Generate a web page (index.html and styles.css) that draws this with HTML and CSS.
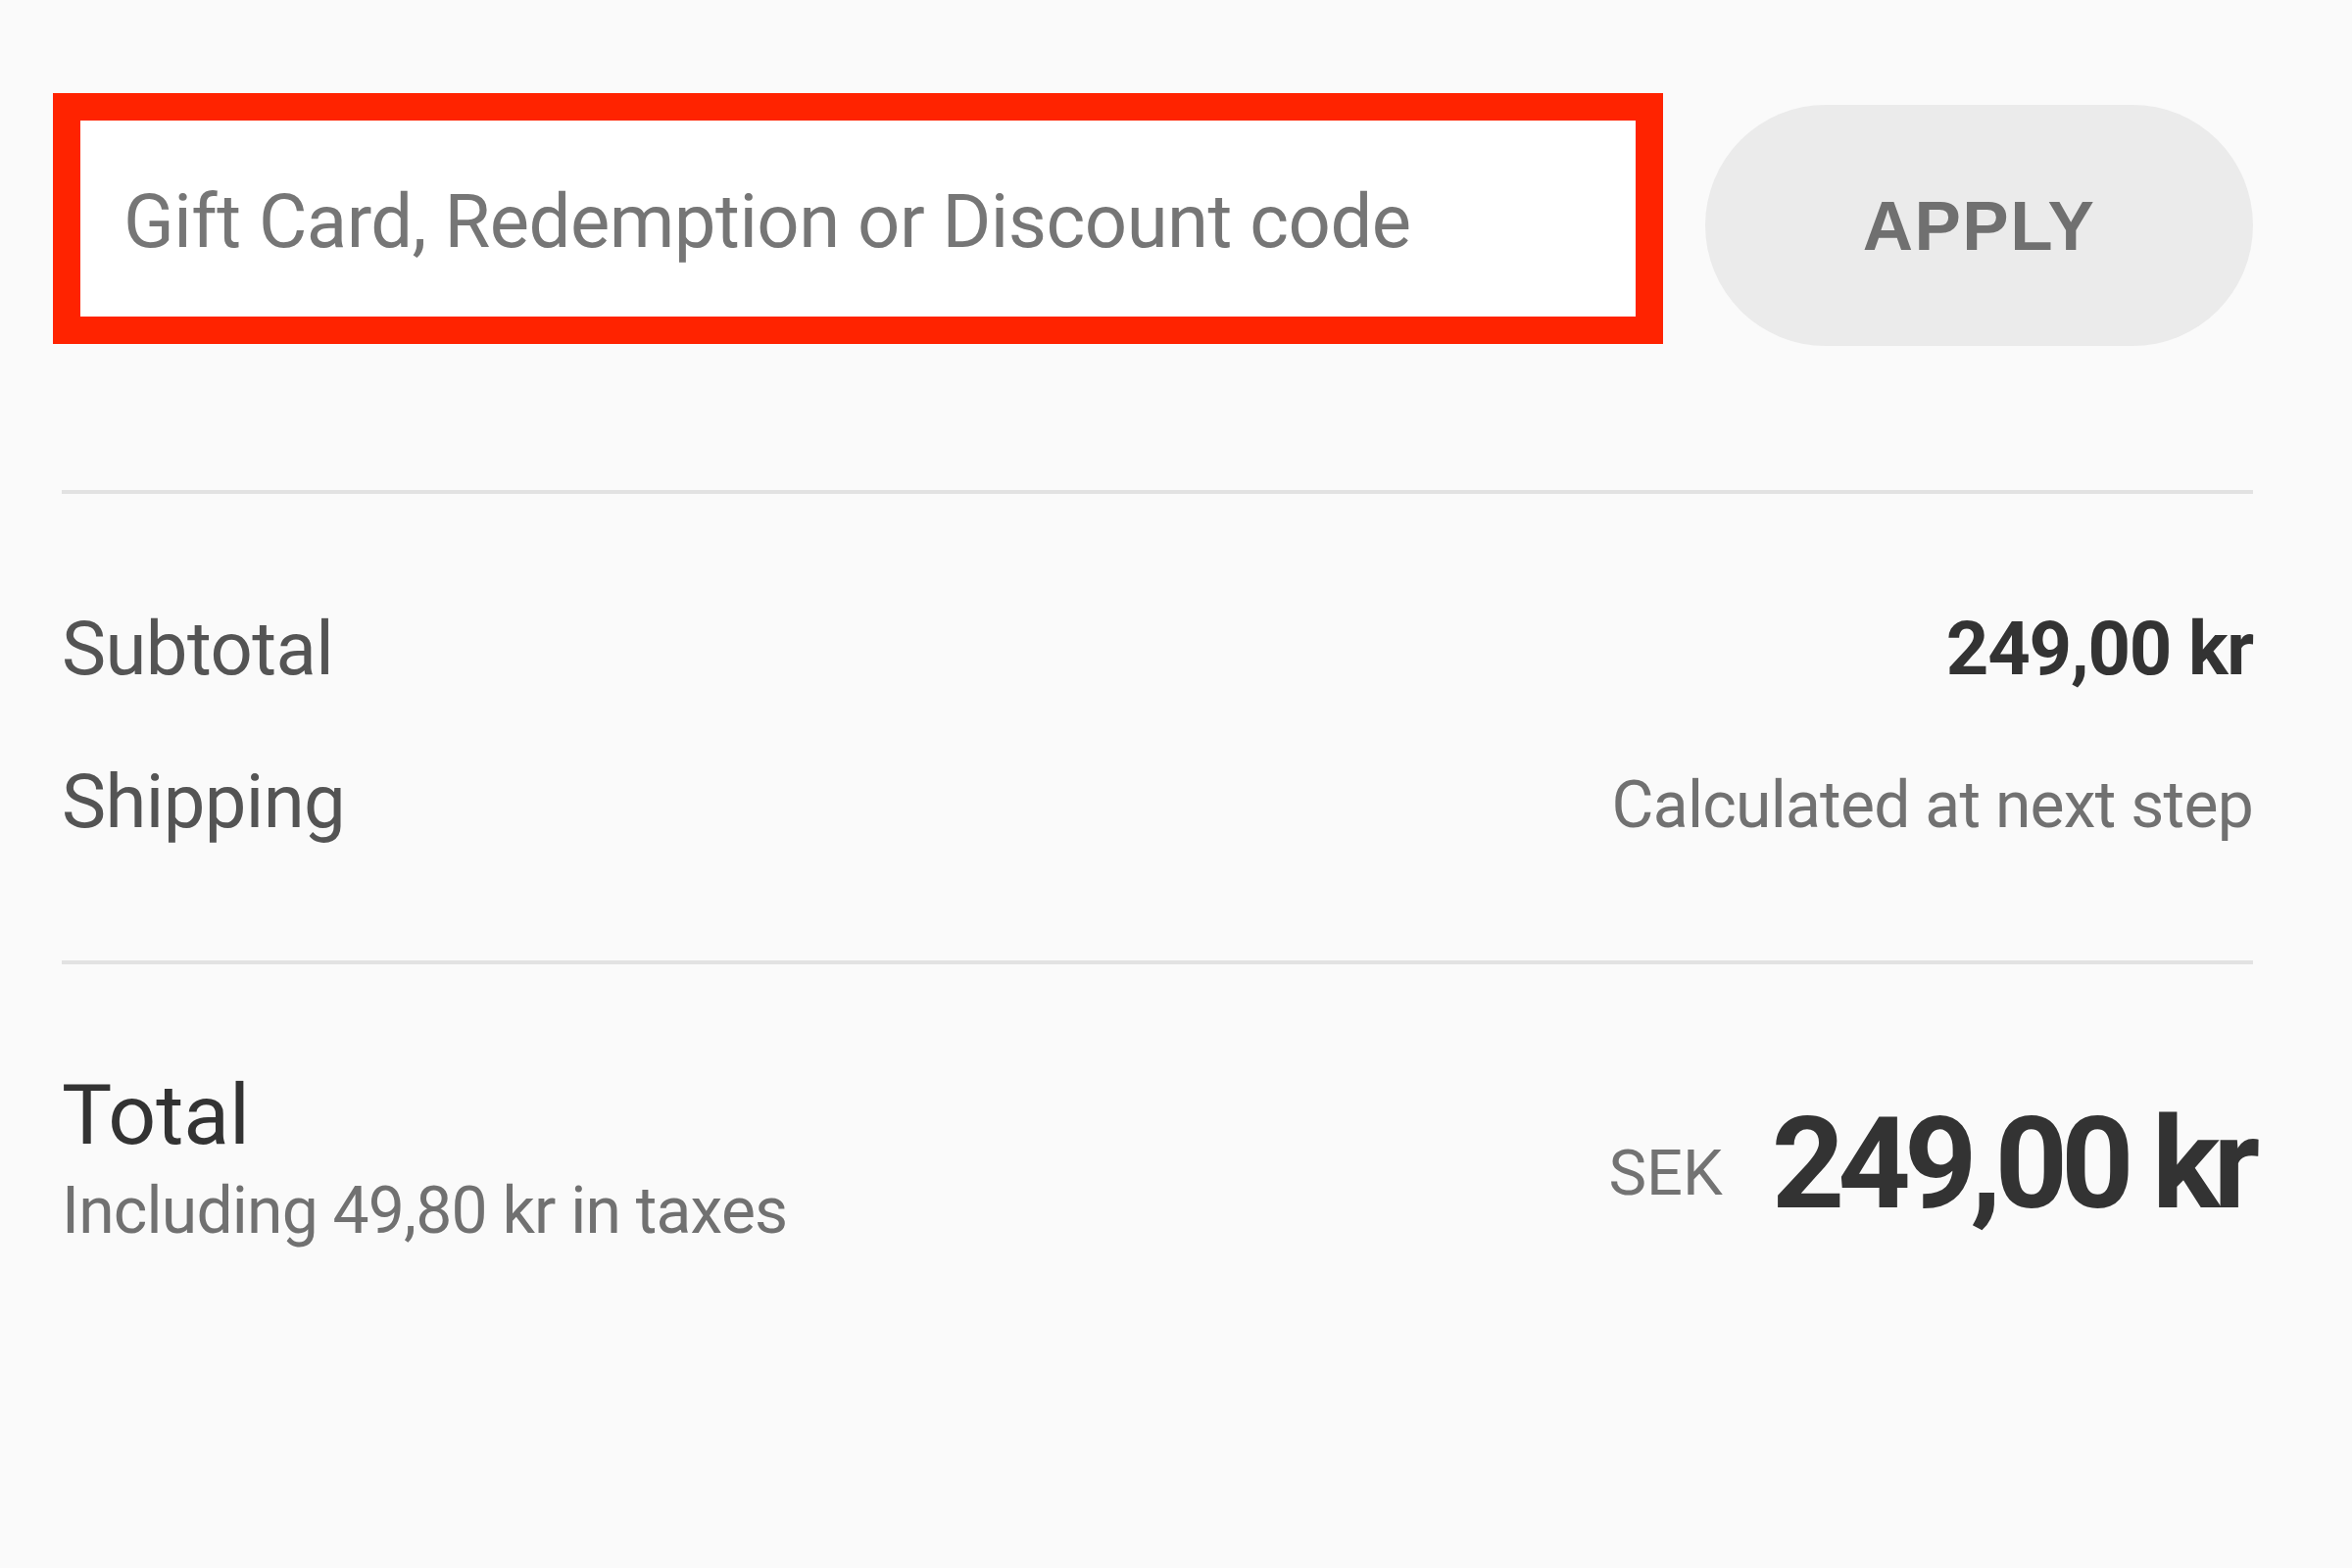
FILE: index.html
```html
<!DOCTYPE html>
<html lang="en">
<head>
<meta charset="utf-8">
<title>Order summary</title>
<link rel="stylesheet" href="styles.css">
</head>
<body>
<main class="summary">
  <form class="code-row" onsubmit="return false">
    <div class="code-box">
      <input class="code-input" type="text" placeholder="Gift Card, Redemption or Discount code">
    </div>
    <button class="apply-btn" type="submit">APPLY</button>
  </form>

  <div class="lines">
    <hr class="divider divider-top">
    <div class="line line-subtotal">
      <span class="line-label">Subtotal</span>
      <span class="line-price">249,00 kr</span>
    </div>
    <div class="line line-shipping">
      <span class="line-label">Shipping</span>
      <span class="line-note">Calculated at next step</span>
    </div>
    <hr class="divider divider-bottom">
    <div class="total">
      <div class="total-left">
        <div class="total-label">Total</div>
        <div class="total-taxes">Including 49,80 kr in taxes</div>
      </div>
      <div class="total-right">
        <span class="currency">SEK</span><span class="total-price">249,00 kr</span>
      </div>
    </div>
  </div>
</main>
</body>
</html>
```

FILE: styles.css
```css
* { box-sizing: border-box; }

html, body {
  margin: 0;
  padding: 0;
  background: #fafafa;
  font-family: Roboto, "Liberation Sans", Arial, sans-serif;
}

.summary {
  width: 2400px;
  height: 1600px;
}

.code-row {
  display: flex;
  align-items: flex-start;
  gap: 43px;
  margin: 0;
  padding: 95px 0 0 54px;
}

.code-box {
  width: 1643px;
  height: 256px;
  border: 28px solid #ff2300;
  background: #ffffff;
  display: flex;
  align-items: center;
}

.code-input {
  width: 100%;
  height: 100%;
  border: 0;
  outline: none;
  background: transparent;
  padding: 6px 0 0 44px;
  font-family: Roboto, "Liberation Sans", Arial, sans-serif;
  font-size: 76px;
  letter-spacing: -0.5px;
  color: #333333;
}

.code-input::placeholder {
  color: #767676;
  opacity: 1;
}

.apply-btn {
  margin-top: 12px;
  width: 559px;
  height: 246px;
  border: 0;
  border-radius: 123px;
  background: #ebebeb;
  color: #707070;
  font-family: "Liberation Sans", Arial, sans-serif;
  font-weight: 700;
  font-size: 71px;
  letter-spacing: 1.5px;
  padding: 0;
  cursor: pointer;
}

.lines {
  padding: 0 101px 0 63px;
}

.divider {
  border: 0;
  height: 4px;
  margin: 0;
  background: #e2e2e2;
}

.divider-top {
  margin-top: 147px;
}

.line {
  display: flex;
  justify-content: space-between;
  align-items: baseline;
  height: 100px;
  line-height: 100px;
}

.line-subtotal {
  margin-top: 108px;
}

.line-shipping {
  margin-top: 56px;
}

.line-label {
  font-size: 76px;
  letter-spacing: -0.6px;
  color: #545454;
}

.line-price {
  font-size: 76px;
  font-weight: 700;
  letter-spacing: -1.2px;
  color: #333333;
}

.line-note {
  font-size: 66px;
  letter-spacing: -0.75px;
  color: #717171;
}

.divider-bottom {
  margin-top: 112px;
}

.total {
  display: flex;
  justify-content: space-between;
  align-items: flex-start;
  margin-top: 104px;
}

.total-label {
  font-size: 86px;
  line-height: 100px;
  color: #333333;
}

.total-taxes {
  margin-top: 8px;
  font-size: 66px;
  line-height: 80px;
  letter-spacing: -0.8px;
  color: #717171;
}

.total-right {
  line-height: 130px;
  margin-top: 35px;
}

.currency {
  font-size: 65px;
  color: #737373;
  vertical-align: 0.2em;
  margin-right: 50px;
}

.total-price {
  font-size: 130px;
  font-weight: 700;
  color: #333333;
  letter-spacing: -7px;
}
```
